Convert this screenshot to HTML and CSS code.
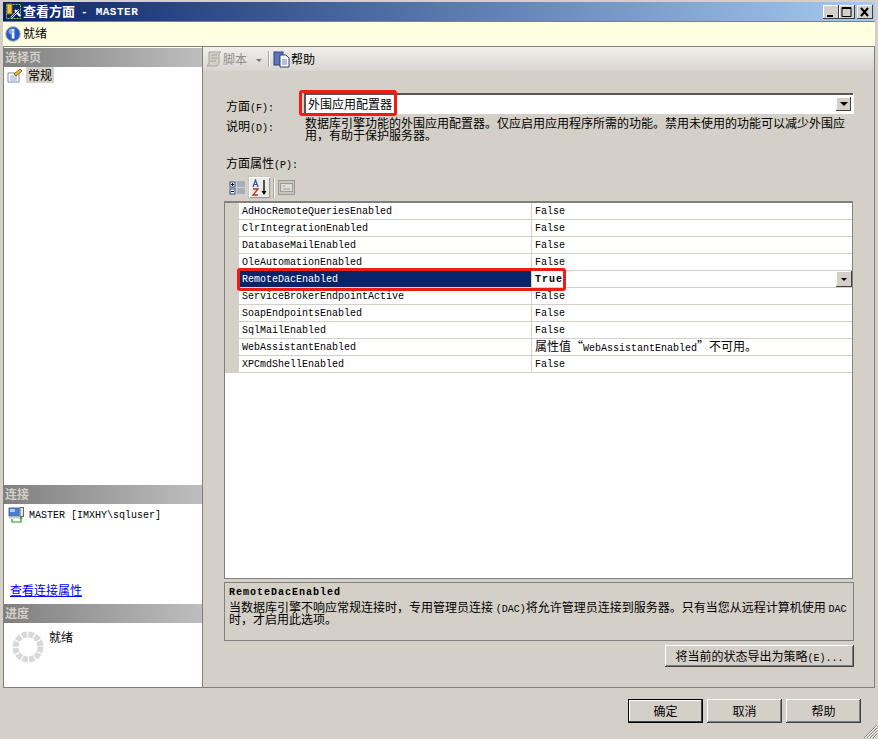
FILE: index.html
```html
<!DOCTYPE html>
<html lang="zh-CN">
<head>
<meta charset="utf-8">
<title>查看方面 - MASTER</title>
<link rel="stylesheet" href="styles.css">
</head>
<body>
<div class="window">
  <header class="titlebar">
    <svg class="title-icon" width="17" height="17" viewBox="0 0 17 17">
      <rect x="1.5" y="1.5" width="14" height="14" fill="none" stroke="#7fd04a" stroke-dasharray="2 1"/>
      <path d="M2 1h5v10H2z" fill="#e8c64a" stroke="#8a6d1a"/>
      <path d="M6 15l8-8M10 7l5 6" stroke="#fff" stroke-width="2"/>
      <path d="M6 15l8-8" stroke="#222" stroke-width="1"/>
    </svg>
    <span class="title-cjk">查看方面</span>
    <span class="title-dash">-</span>
    <span class="title-name">MASTER</span>
    <div class="win-buttons">
      <span class="win-btn"><svg width="16" height="14" viewBox="0 0 16 14"><rect x="4" y="10" width="6" height="2" fill="#000"/></svg></span>
      <span class="win-btn"><svg width="16" height="14" viewBox="0 0 16 14"><path d="M3 2.500h9v9H3z" fill="none" stroke="#000"/><rect x="3" y="2" width="9" height="2" fill="#000"/></svg></span>
      <span class="win-btn win-close"><svg width="16" height="14" viewBox="0 0 16 14"><path d="M4 3l7 8M11 3l-7 8" stroke="#000" stroke-width="2"/></svg></span>
    </div>
  </header>

  <div class="status">
    <svg width="16" height="16" viewBox="0 0 16 16">
      <circle cx="8" cy="8" r="7.200" fill="#2a5bc4" stroke="#8f9fbe"/>
      <circle cx="6.500" cy="5.500" r="3" fill="#7ea4ee"/>
      <rect x="6.800" y="6.500" width="2.600" height="6" fill="#fff"/>
      <rect x="6.800" y="3" width="2.600" height="2.400" fill="#fff"/>
    </svg>
    <span class="status-text">就绪</span>
  </div>

  <main class="main">
    <aside class="side">
      <h2 class="side-head">选择页</h2>
      <div class="side-pages">
        <div class="page-row">
          <svg width="16" height="15" viewBox="0 0 16 15">
            <path d="M1 5h11v9H1z" fill="#fff" stroke="#7d8aa0"/>
            <path d="M3 8h7M3 10h7M3 12h7" stroke="#8ea3c4"/>
            <path d="M7 6l6-5 2 2-6 5z" fill="#e6b93a" stroke="#8a6d1a"/>
          </svg>
          <span class="page-name">常规</span>
        </div>
      </div>
      <h2 class="side-head">连接</h2>
      <div class="side-conn">
        <div class="conn-row">
          <svg width="16" height="16" viewBox="0 0 16 16">
            <rect x="1" y="1" width="10" height="8" fill="#3f7fe0" stroke="#667"/>
            <rect x="2" y="2" width="5" height="3" fill="#a8d0fa"/>
            <rect x="12" y="0.500" width="3.500" height="9" fill="#e4e4e4" stroke="#667"/>
            <rect x="1" y="10" width="10" height="1.500" fill="#c8c8c8"/>
            <path d="M4 12v3h9v-4" fill="none" stroke="#1d9a1d" stroke-width="1.200"/>
            <path d="M11 11.500l2-2 2 2z" fill="#1d9a1d"/>
          </svg>
          <span class="mono">MASTER [IMXHY\sqluser]</span>
        </div>
        <a class="conn-link" href="#">查看连接属性</a>
      </div>
      <h2 class="side-head">进度</h2>
      <div class="side-progress">
        <svg class="spinner" width="32" height="32" viewBox="0 0 32 32">
          <circle cx="16" cy="16" r="12.500" fill="none" stroke="#d8d8d8" stroke-width="6" stroke-dasharray="5.300 1.250"/>
        </svg>
        <span class="progress-text">就绪</span>
      </div>
    </aside>

    <section class="content">
      <div class="toolbar">
        <svg class="tool-script" width="18" height="17" viewBox="0 0 18 17">
          <path d="M3 1h12l-2 2v9l-2 3H1l2-3z" fill="#d4d0c8" stroke="#a5a29b"/>
          <path d="M5 4h6M5 7h6M4 10h6" stroke="#a5a29b"/>
        </svg>
        <span class="tool-disabled">脚本</span>
        <span class="tool-caret"></span>
        <span class="tool-sep"></span>
        <svg width="17" height="17" viewBox="0 0 17 17">
          <rect x="1" y="1" width="9" height="13" fill="#5b77b8" stroke="#2c3f78"/>
          <path d="M7 4h6l3 3v9H7z" fill="#fff" stroke="#2c3f78"/>
          <path d="M9 9h5M9 11h5M9 13h5" stroke="#6b82b5"/>
        </svg>
        <span class="tool-label">帮助</span>
      </div>

      <div class="form">
        <div class="field">
          <label class="field-label">方面<span class="mono">(F):</span></label>
          <div class="combo">
            <span class="combo-value">外围应用配置器</span>
            <span class="arrow-btn"><span class="arrow"></span></span>
          </div>
        </div>
        <div class="field field-desc">
          <span class="field-label">说明<span class="mono">(D):</span></span>
          <p class="desc-text">数据库引擎功能的外围应用配置器。仅应启用应用程序所需的功能。禁用未使用的功能可以减少外围应<br>用，有助于保护服务器。</p>
        </div>
        <div class="props-label">方面属性<span class="mono">(P):</span></div>

        <div class="grid-tools">
          <span class="grid-tool">
            <svg width="18" height="16" viewBox="0 0 18 16">
              <rect x="1" y="2" width="5" height="5" fill="#fff" stroke="#2c4a8a"/>
              <rect x="1" y="9" width="5" height="5" fill="#fff" stroke="#2c4a8a"/>
              <path d="M2 4.500h3M3.500 3v3M2 11.500h3" stroke="#000"/>
              <path d="M8 2h8M8 4h8M8 6h8M8 9h8M8 11h8M8 13h8" stroke="#7f8ea8"/>
            </svg>
          </span>
          <span class="grid-tool grid-tool-on">
            <svg width="18" height="18" viewBox="0 0 18 18">
              <path d="M2 8l2.500-7L7 8M3 5.500h3" fill="none" stroke="#2c4fb0" stroke-width="1.200"/>
              <path d="M2 10h5L2 16h5" fill="none" stroke="#b03030" stroke-width="1.300"/>
              <path d="M13 1v14" stroke="#000" stroke-width="1.300"/>
              <path d="M10.500 12h5L13 16z" fill="#000"/>
            </svg>
          </span>
          <span class="tool-sep tool-sep-grid"></span>
          <span class="grid-tool">
            <svg width="17" height="15" viewBox="0 0 17 15">
              <rect x="0.500" y="0.500" width="16" height="14" fill="#c8c5be" stroke="#9c9a94"/>
              <rect x="2.500" y="3.500" width="12" height="8" fill="#dedbd4" stroke="#9c9a94"/>
              <path d="M5 6h2M5 9h7" stroke="#9c9a94"/>
            </svg>
          </span>
        </div>

        <div class="grid">
          <div class="grid-row"><span class="cell-name">AdHocRemoteQueriesEnabled</span><span class="cell-value">False</span></div>
          <div class="grid-row"><span class="cell-name">ClrIntegrationEnabled</span><span class="cell-value">False</span></div>
          <div class="grid-row"><span class="cell-name">DatabaseMailEnabled</span><span class="cell-value">False</span></div>
          <div class="grid-row"><span class="cell-name">OleAutomationEnabled</span><span class="cell-value">False</span></div>
          <div class="grid-row grid-row-selected"><span class="cell-name">RemoteDacEnabled</span><span class="cell-value">True</span><span class="arrow-btn arrow-btn-grid"><span class="arrow"></span></span></div>
          <div class="grid-row"><span class="cell-name">ServiceBrokerEndpointActive</span><span class="cell-value">False</span></div>
          <div class="grid-row"><span class="cell-name">SoapEndpointsEnabled</span><span class="cell-value">False</span></div>
          <div class="grid-row"><span class="cell-name">SqlMailEnabled</span><span class="cell-value">False</span></div>
          <div class="grid-row"><span class="cell-name">WebAssistantEnabled</span><span class="cell-value cell-cjk">属性值“<span class="mono">WebAssistantEnabled</span>”不可用。</span></div>
          <div class="grid-row"><span class="cell-name">XPCmdShellEnabled</span><span class="cell-value">False</span></div>
        </div>

        <div class="help-box">
          <div class="help-title">RemoteDacEnabled</div>
          <p class="help-text">当数据库引擎不响应常规连接时，专用管理员连接 <span class="mono">(DAC)</span>将允许管理员连接到服务器。只有当您从远程计算机使用 <span class="mono">DAC</span><br>时，才启用此选项。</p>
        </div>

        <div class="export-row">
          <button class="btn btn-export" type="button">将当前的状态导出为策略<span class="mono">(E)...</span></button>
        </div>
      </div>
    </section>
  </main>

  <footer class="footer">
    <button class="btn btn-default" type="button">确定</button>
    <button class="btn" type="button">取消</button>
    <button class="btn" type="button">帮助</button>
  </footer>
  <svg class="grip" width="15" height="15" viewBox="0 0 15 15">
    <path d="M14 1L1 14M14 4L4 14M14 7L7 14M14 10L10 14" stroke="#808080"/>
    <path d="M14 2L2 14M14 5L5 14M14 8L8 14M14 11L11 14" stroke="#fff"/>
  </svg>

  <div class="mark mark-combo"></div>
  <div class="mark mark-row"></div>
</div>
</body>
</html>
```

FILE: styles.css
```css
* { box-sizing: border-box; }
html, body { margin: 0; padding: 0; }
body {
  width: 878px;
  height: 739px;
  overflow: hidden;
  background: #d4d0c8;
  color: #000;
  font: 12px/14px "Noto Sans CJK SC", "Liberation Sans", sans-serif;
}
h2, p { margin: 0; font-weight: normal; }
.mono { font-family: "Liberation Mono", "Noto Sans CJK SC", monospace; font-size: 10px; line-height: 0; }

.window {
  position: relative;
  width: 878px;
  height: 739px;
  padding: 2px 3px 0;
  display: flex;
  flex-direction: column;
}

.titlebar {
  height: 19px;
  flex: none;
  display: flex;
  align-items: center;
  padding-left: 2px;
  color: #fff;
  background: linear-gradient(90deg, #0a246a, #a6caf0);
}
.title-icon { margin-right: 1px; }
.title-cjk { font-size: 13px; font-weight: 700; padding-bottom: 2px; }
.title-dash { margin-left: 6px; font: 700 11px "Liberation Mono", monospace; }
.title-name { margin-left: 8px; font: 700 11px "Liberation Mono", monospace; letter-spacing: .5px; }
.win-buttons { margin-left: auto; display: flex; padding-right: 2px; }
.win-btn {
  width: 16px;
  height: 14px;
  display: block;
  background: #d4d0c8;
  box-shadow: inset -1px -1px 0 #404040, inset 1px 1px 0 #fff;
}
.win-btn svg { display: block; }
.win-close { margin-left: 2px; }

.status {
  height: 26px;
  flex: none;
  display: flex;
  align-items: center;
  gap: 2px;
  padding: 0 2px;
  background: #ffffe1;
  border-top: 1px solid #808080;
  border-bottom: 1px solid #808080;
}
.status svg { flex: none; }
.status-text { padding-bottom: 2px; }

.main {
  height: 641px;
  flex: none;
  display: flex;
  border-left: 1px solid #808080;
  border-bottom: 1px solid #808080;
  border-right: 1px solid #808080;
}

.side {
  width: 198px;
  flex: none;
  display: flex;
  flex-direction: column;
  background: #fff;
  padding-top: 1px;
}
.side-head {
  height: 19px;
  flex: none;
  padding-left: 1px;
  font-size: 12px;
  line-height: 17px;
  font-weight: 700;
  color: #d4d0c8;
  background: linear-gradient(90deg, #808080, #bebebe);
}
.side-pages { height: 418px; flex: none; padding: 0 0 0 3px; }
.page-row { display: flex; align-items: center; gap: 3px; }
.page-name { background: #d4d0c8; padding: 0 2px; line-height: 16px; width: 28px; }
.side-conn {
  height: 100px;
  flex: none;
  display: flex;
  flex-direction: column;
  padding: 2px 0 0 4px;
}
.conn-row { display: flex; align-items: flex-start; gap: 5px; padding-top: 1px; }
.conn-row .mono { line-height: 18px; }
.conn-link {
  margin-top: auto;
  margin-bottom: 7px;
  margin-left: 2px;
  line-height: 14px;
  color: #0000ff;
  text-decoration: underline;
}
.side-progress { flex: 1; display: flex; align-items: flex-start; padding: 8px 0 0 8px; }
.spinner { display: block; }
.progress-text { margin-left: 5px; margin-top: -1px; }

.content {
  flex: 1;
  min-width: 0;
  display: flex;
  flex-direction: column;
  border-left: 1px solid #808080;
}
.toolbar {
  height: 24px;
  flex: none;
  display: flex;
  align-items: center;
  padding-left: 3px;
  background: linear-gradient(180deg, #f0efeb, #d8d5cf);
}
.tool-script { margin-right: -1px; }
.tool-disabled { color: #8f8d88; }
.tool-caret {
  width: 0;
  height: 0;
  margin: 2px 0 0 9px;
  border: 3px solid transparent;
  border-top: 3px solid #777;
  border-bottom: 0;
}
.tool-sep {
  width: 2px;
  height: 16px;
  margin: 0 3px 0 6px;
  background: #fff;
  border-left: 1px solid #a8a59e;
}
.tool-label { margin-left: 1px; }

.form { flex: 1; display: flex; flex-direction: column; padding: 22px 20px 0 21px; min-height: 0; }
.field { display: flex; }
.field-label { width: 80px; padding-left: 2px; flex: none; line-height: 14px; margin-top: 6px; }
.combo {
  flex: 1;
  height: 20px;
  margin-right: 1px;
  display: flex;
  align-items: center;
  background: #fff;
  border-top: 2px solid #555;
  border-left: 2px solid #555;
  box-shadow: 1px 1px 0 #fff;
  padding-left: 2px;
  justify-content: space-between;
}
.arrow-btn {
  width: 15px;
  height: 14px;
  margin-right: 2px;
  display: flex;
  align-items: center;
  justify-content: center;
  background: #d4d0c8;
  box-shadow: inset -1px -1px 0 #404040, inset 1px 1px 0 #fff;
}
.arrow {
  width: 0;
  height: 0;
  border: 4px solid transparent;
  border-top: 4px solid #000;
  border-bottom: 0;
}
.field-desc { margin-top: 4px; }
.field-desc .field-label { margin-top: 2px; }
.desc-text { margin-left: 1px; line-height: 12px; white-space: nowrap; }
.props-label { margin-top: 15px; padding-left: 2px; line-height: 14px; height: 14px; }

.grid-tools { height: 23px; margin-top: 6px; display: flex; align-items: center; padding-left: 3px; gap: 1px; }
.grid-tool { width: 21px; height: 21px; display: flex; align-items: center; justify-content: center; }
.grid-tool-on { background: #ecebe6; box-shadow: inset 1px 1px 0 #fff, inset -1px -1px 0 #a09d96, 0 0 0 1px #c9c6bf; }
.tool-sep-grid { margin: 0 0 0 2px; height: 20px; }

.grid {
  height: 378px;
  margin-top: 2px;
  margin-right: 1px;
  background: #fff;
  border: 1px solid #808080;
  border-top-width: 2px;
  flex: none;
}
.grid-row {
  height: 17px;
  display: flex;
  margin-left: 14px;
  border-bottom: 1px solid #d4d0c8;
  font: 10px/16px "Liberation Mono", "Noto Sans CJK SC", monospace;
  white-space: nowrap;
  position: relative;
}
.grid-row::before {
  content: "";
  position: absolute;
  left: -14px;
  width: 14px;
  top: 0;
  bottom: -1px;
  background: #d4d0c8;
}
.cell-name { width: 293px; flex: none; padding: 1px 0 0 3px; border-right: 1px solid #d4d0c8; height: 16px; }
.cell-value { flex: 1; padding: 1px 0 0 3px; height: 16px; }
.cell-cjk { font: 12px/14px "Noto Sans CJK SC", sans-serif; padding-top: 0; }
.grid-row-selected .cell-name { background: #0a246a; color: #fff; }
.grid-row-selected .cell-value { font-weight: 700; letter-spacing: 1px; }
.arrow-btn-grid { position: absolute; right: 0; top: 0; width: 16px; height: 16px; margin-right: 0; }
.arrow-btn-grid .arrow { border-width: 3px; border-top-width: 3px; border-bottom-width: 0; }

.help-box {
  height: 59px;
  flex: none;
  margin-top: 3px;
  border: 1px solid #808080;
  padding: 4px 4px 0;
}
.help-title { font: 700 10px/12px "Liberation Mono", monospace; letter-spacing: 1px; height: 12px; margin-bottom: 2px; }
.help-text { line-height: 12px; white-space: nowrap; }

.export-row { display: flex; justify-content: flex-end; margin-top: 4px; }

.btn {
  height: 24px;
  width: 75px;
  padding: 0;
  border: 0;
  font: 12px/14px "Noto Sans CJK SC", sans-serif;
  color: #000;
  background: #d4d0c8;
  box-shadow: inset -1px -1px 0 #404040, inset 1px 1px 0 #fff, inset -2px -2px 0 #808080;
}
.btn-export { width: 189px; height: 22px; }
.btn-default {
  outline: 1px solid #000;
  outline-offset: -1px;
  box-shadow: inset -2px -2px 0 #404040, inset 2px 2px 0 #fff;
}

.footer {
  flex: 1;
  display: flex;
  justify-content: flex-end;
  gap: 4px;
  padding: 11px 14px 0 0;
}

.grip { position: absolute; right: 0; bottom: 0; }

.mark {
  position: absolute;
  border: 3px solid #ee1c14;
  border-radius: 3px;
  pointer-events: none;
}
.mark-combo { left: 299px; top: 90px; width: 98px; height: 26px; }
.mark-row { left: 237px; top: 268px; width: 329px; height: 23px; }
```
